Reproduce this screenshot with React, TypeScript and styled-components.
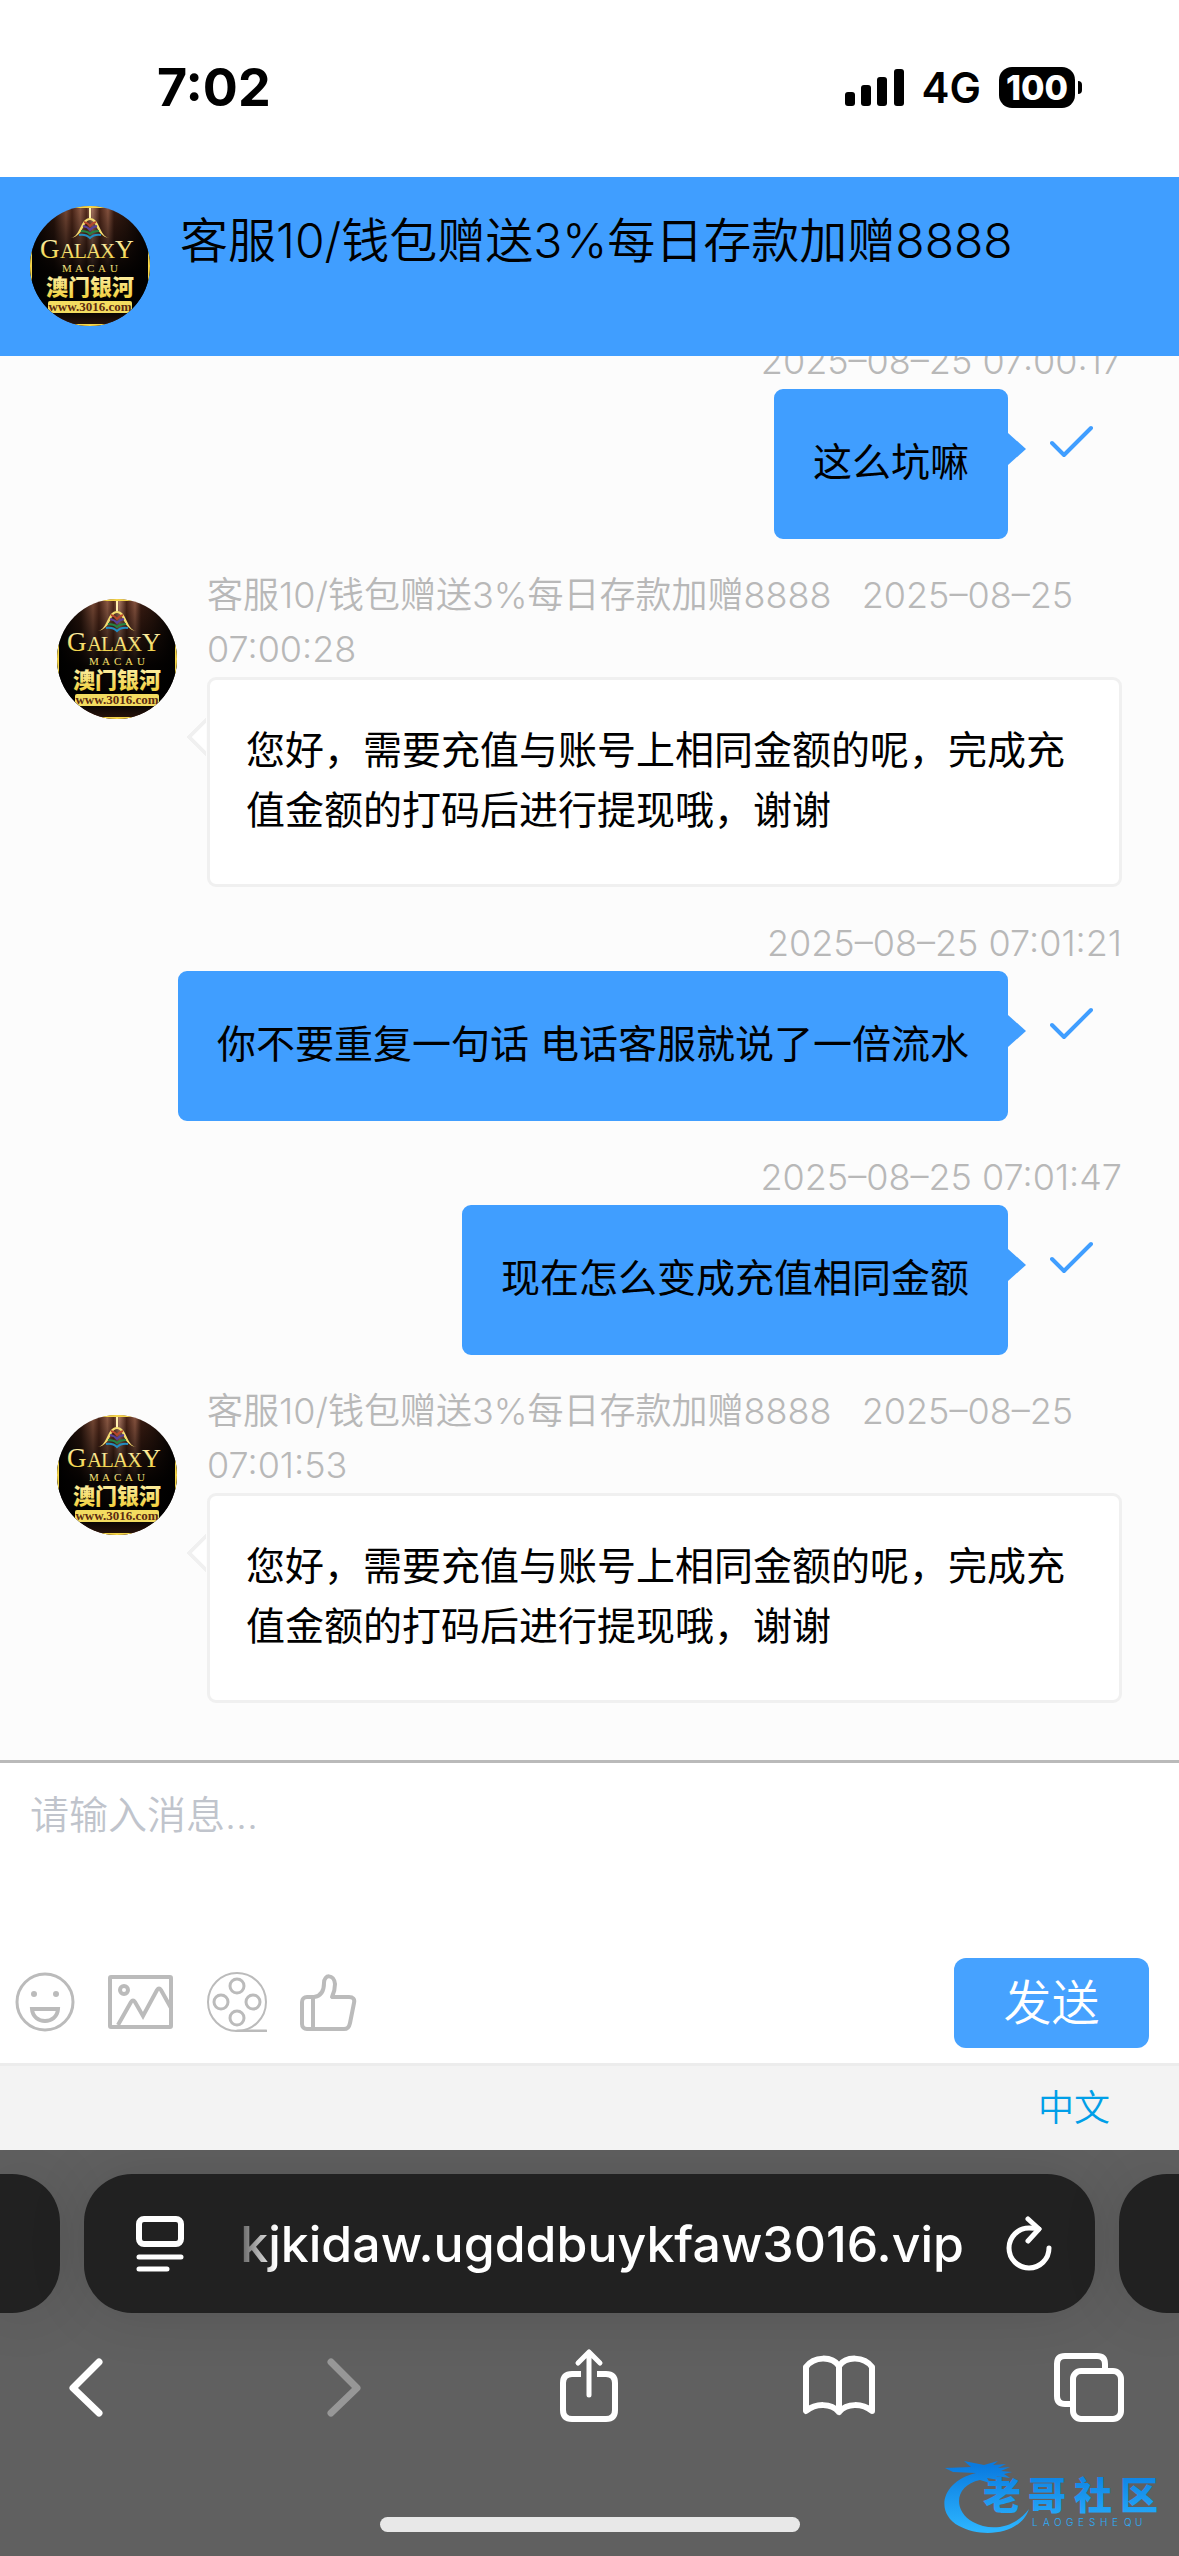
import React from "react";
import styled, { createGlobalStyle, css } from "styled-components";

const sans = `Inter, "Noto Sans CJK SC", sans-serif`;

const GlobalStyle = createGlobalStyle`
  *, *::before, *::after { box-sizing: border-box; }
  body { margin: 0; background: #fff; }
  button, textarea { font: inherit; }
`;

const Page = styled.div`
  display: flex;
  flex-direction: column;
  height: 100vh;
  overflow: hidden;
  font-family: ${sans};
  font-weight: 350;
  color: #000;
`;

/* ---------- status bar ---------- */

const StatusBar = styled.div`
  flex: none;
  display: flex;
  align-items: center;
  justify-content: space-between;
  height: 177px;
  padding: 0 97px 2px 157px;
  background: #fff;
`;

const Clock = styled.time`
  font-size: 52px;
  font-weight: 700;
  line-height: 60px;
`;

const StatusIcons = styled.div`
  display: flex;
  align-items: center;
  gap: 18px;
`;

const Network = styled.span`
  font-size: 42px;
  font-weight: 600;
  line-height: 48px;
`;

const Battery = styled.div`
  display: flex;
  align-items: center;
  gap: 3px;
  &::after {
    content: "";
    width: 4px;
    height: 13px;
    border-radius: 0 4px 4px 0;
    background: #000;
  }
`;

const BatteryLevel = styled.span`
  width: 76px;
  border-radius: 13px;
  background: #000;
  color: #fff;
  font-size: 34px;
  font-weight: 800;
  line-height: 41px;
  text-align: center;
`;

/* ---------- chat ---------- */

const ChatHeader = styled.header`
  flex: none;
  display: flex;
  gap: 30px;
  height: 179px;
  padding: 29px 30px;
  background: #409eff;
`;

const ChatTitle = styled.h1`
  margin: 0;
  font-size: 48px;
  font-weight: 350;
  line-height: 69px;
`;

const AvatarSvg = styled.svg`
  flex: none;
  display: block;
  width: 120px;
  height: 120px;
  border-radius: 50%;
`;

const MessageList = styled.main`
  flex: 1 1 0;
  min-height: 0;
  display: flex;
  flex-direction: column;
  justify-content: flex-end;
  gap: 29px;
  padding: 0 57px;
  padding-bottom: 57px;
  overflow: hidden;
  background: #fcfcfc;
`;

const AgentMessage = styled.article`
  flex: none;
  display: grid;
  grid-template-columns: 120px 1fr;
  column-gap: 30px;
  align-items: start;
  & > svg { margin-top: 31px; }
`;

const OwnMessage = styled.article`
  flex: none;
  display: flex;
  flex-direction: column;
  align-items: flex-end;
`;

const Meta = styled.div`
  padding-bottom: 1px;
  color: #b8b8b8;
  font-size: 36px;
  line-height: 54px;
`;

const Sender = styled.span`
  margin-right: 20px;
`;

const OwnRow = styled.div`
  display: flex;
  gap: 42px;
  padding-right: 29px;
  & > svg { margin-top: 36px; }
`;

const Bubble = styled.p<{ $own?: boolean }>`
  position: relative;
  margin: 0;
  padding: 40px 36px 44px;
  border: 3px solid ${(p) => (p.$own ? "#409eff" : "#f0f0f0")};
  border-radius: 9px;
  background: ${(p) => (p.$own ? "#409eff" : "#fff")};
  font-size: 39px;
  font-weight: 400;
  line-height: 60px;

  &::before {
    content: "";
    position: absolute;
    ${(p) =>
      p.$own
        ? css`
            top: 41px;
            left: 100%;
            border: 16px solid transparent;
            border-left: 18px solid #409eff;
            border-right: 0;
            margin-left: 3px;
          `
        : css`
            top: 43px;
            left: -18px;
            width: 28px;
            height: 28px;
            border: solid #f0f0f0;
            border-width: 0 0 4px 4px;
            background: #fff;
            clip-path: polygon(0 0, 100% 100%, 0 100%);
            transform: rotate(45deg);
          `}
  }
`;

/* ---------- composer ---------- */

const Composer = styled.form`
  flex: none;
  border-top: 3px solid #bababa;
  border-bottom: 3px solid #ececec;
  background: #fff;
`;

const MessageInput = styled.textarea`
  display: block;
  width: 100%;
  height: 180px;
  padding: 22px 30px;
  border: 0;
  outline: 0;
  resize: none;
  background: transparent;
  font-size: 39px;
  line-height: 60px;
  &::placeholder { color: #c0c4cc; opacity: 1; }
`;

const ComposerTools = styled.div`
  display: flex;
  align-items: center;
  justify-content: space-between;
  height: 120px;
  padding: 0 30px 0 15px;
`;

const ToolGroup = styled.div`
  display: flex;
  align-items: center;
  gap: 33px;
  padding-bottom: 3px;
`;

const IconButton = styled.button`
  display: flex;
  padding: 0;
  border: 0;
  background: none;
  color: inherit;
`;

const ToolButton = styled(IconButton)`
  color: #bbb;
`;

const SendButton = styled.button`
  width: 195px;
  height: 90px;
  padding: 0;
  border: 0;
  border-radius: 12px;
  background: #46a2ff;
  color: #fff;
  font-size: 48px;
  line-height: 90px;
`;

const LanguageBar = styled.div`
  flex: none;
  display: flex;
  justify-content: flex-end;
  align-items: center;
  height: 84px;
  padding: 0 69px;
  background: #f3f3f3;
`;

const LanguageLink = styled.a`
  color: #009fe8;
  font-size: 36px;
  line-height: 54px;
  text-decoration: none;
`;

/* ---------- browser chrome ---------- */

const BrowserChrome = styled.footer`
  position: relative;
  flex: none;
  height: 406px;
  padding-top: 24px;
  overflow: hidden;
  background: #606060;
  color: #fff;
`;

const TabStrip = styled.div`
  display: flex;
  gap: 24px;
`;

const TabPill = styled.div`
  height: 139px;
  border-radius: 48px;
  background: #212121;
  box-shadow: 0 0 60px rgba(0, 0, 0, 0.12);
`;

const SideTab = styled(TabPill)<{ $side: "left" | "right" }>`
  flex: 0 0 60px;
  border-radius: ${(p) => (p.$side === "left" ? "0 48px 48px 0" : "48px 0 0 48px")};
`;

const AddressBar = styled(TabPill)`
  flex: 1;
  display: flex;
  align-items: center;
  gap: 42px;
  padding: 0 43px 0 52px;
`;

const Address = styled.span`
  flex: 1;
  text-align: right;
  font-size: 50px;
  font-weight: 500;
  line-height: 60px;
  mask-image: linear-gradient(to right, transparent, #000 50px);
`;

const BrowserNav = styled.nav`
  display: flex;
  justify-content: space-between;
  padding: 34px 52px 34px 49px;
`;

const HomeIndicator = styled.div`
  width: 420px;
  height: 15px;
  margin: 60px auto 0;
  border-radius: 8px;
  background: #e8e8e8;
`;

const Watermark = styled.svg`
  position: absolute;
  right: 10px;
  bottom: 20px;
  width: 229px;
  height: 80px;
`;

/* ---------- drawings ---------- */

const Avatar = ({ id }: { id: string }) => (
  <AvatarSvg viewBox="0 0 120 120" role="img" aria-label="Galaxy Macau">
    <defs>
      <linearGradient id={`${id}-curtain`} x1="0" x2="1" y1="0" y2="0">
        <stop offset="0" stopColor="#000" />
        <stop offset=".2" stopColor="#2a150d" />
        <stop offset=".3" stopColor="#7a4a36" />
        <stop offset=".35" stopColor="#4a2417" />
        <stop offset=".42" stopColor="#8f5b45" />
        <stop offset=".47" stopColor="#552c1d" />
        <stop offset=".52" stopColor="#a87560" />
        <stop offset=".58" stopColor="#4a2417" />
        <stop offset=".65" stopColor="#8a5540" />
        <stop offset=".7" stopColor="#3a1c12" />
        <stop offset=".8" stopColor="#2a150d" />
        <stop offset="1" stopColor="#000" />
      </linearGradient>
      <linearGradient id={`${id}-fade`} x1="0" x2="0" y1="0" y2="1">
        <stop offset="0" stopColor="#000" stopOpacity="0" />
        <stop offset=".55" stopColor="#000" stopOpacity=".9" />
        <stop offset=".85" stopColor="#000" />
        <stop offset="1" stopColor="#2a150c" />
      </linearGradient>
      <linearGradient id={`${id}-gold`} x1="0" x2="0" y1="0" y2="1">
        <stop offset="0" stopColor="#fff6c0" />
        <stop offset="1" stopColor="#f0cc30" />
      </linearGradient>
    </defs>
    <rect width="120" height="120" fill={`url(#${id}-curtain)`} />
    <rect width="120" height="120" fill={`url(#${id}-fade)`} />
    <path d="M0 1h120M0 119h120M1 0v120M119 0v120" stroke="#f5d54a" strokeWidth="2" />
    <path d="M59 2h2v12h-2z" fill="#fff0b0" />
    <path d="M41 32c10-2 9-20 19-20s9 18 19 20c-13-2-12-18-19-18s-6 16-19 18z" fill="#f4dc70" />
    <g fill="none" strokeWidth="2">
      <path d="M54 16q4 1 6 4 2-3 6-4" stroke="#b8472c" />
      <path d="M53 20q5 1 7 4 2-3 7-4" stroke="#59419a" />
      <path d="M51 25q6 0 9 3 3-3 9-3" stroke="#258343" />
      <path d="M49 29q7-1 11 3 4-4 11-3" stroke="#238cc0" />
    </g>
    <g fontFamily="'Liberation Serif', serif" fill={`url(#${id}-gold)`}>
      <text x="10" y="52" fontSize="27">G</text>
      <text x="30 44 56 70" y="52" fontSize="21">ALAX</text>
      <text x="85" y="52" fontSize="26">Y</text>
      <text x="32 45 57 68 80" y="66" fontSize="11">MACAU</text>
    </g>
    <text x="60" y="89" fontSize="22" fontWeight="800" textAnchor="middle" fontFamily="'Noto Sans CJK SC', sans-serif" fill={`url(#${id}-gold)`}>澳门银河</text>
    <rect x="18" y="95" width="84" height="12" rx="2" fill="#f3dc60" />
    <text x="60" y="105" fontSize="13" fontWeight="700" textAnchor="middle" fontFamily="'Liberation Serif', serif" fill="#5b2a10">www.3016.com</text>
  </AvatarSvg>
);

const SignalIcon = () => (
  <svg width="59" height="37" viewBox="0 0 59 37" aria-hidden="true">
    <rect x="0" y="23" width="10" height="14" rx="3" />
    <rect x="16" y="16" width="10" height="21" rx="3" />
    <rect x="32" y="8" width="10" height="29" rx="3" />
    <rect x="49" y="0" width="10" height="37" rx="3" />
  </svg>
);

const SentIcon = () => (
  <svg width="43" height="33" viewBox="0 0 43 33" role="img" aria-label="已发送">
    <path d="M2 18l12 12L41 3" fill="none" stroke="#409eff" strokeWidth="4" strokeLinecap="round" strokeLinejoin="round" />
  </svg>
);

const SmileIcon = () => (
  <svg width="60" height="60" viewBox="0 0 60 60" fill="none" stroke="currentColor" strokeWidth="3">
    <circle cx="30" cy="30" r="28" />
    <circle cx="19" cy="22" r="3" fill="currentColor" stroke="none" />
    <circle cx="41" cy="22" r="3" fill="currentColor" stroke="none" />
    <path d="M17 37h26c-1 16-25 16-26 0z" strokeWidth="4" />
  </svg>
);

const ImageIcon = () => (
  <svg width="66" height="54" viewBox="0 0 66 54" fill="none" stroke="currentColor" strokeWidth="4" strokeLinejoin="round">
    <rect x="2" y="2" width="61" height="50" rx="1" />
    <circle cx="16" cy="15" r="4" />
    <path d="M10 50L23 27q2-3 4 0l8 14L49 15q2-3 4 0l10 18" strokeLinejoin="miter" />
  </svg>
);

const FilmIcon = () => (
  <svg width="60" height="60" viewBox="0 0 60 60" fill="none" stroke="currentColor" strokeWidth="3">
    <circle cx="30" cy="30" r="29" strokeWidth="2" />
    <circle cx="30" cy="14" r="7" />
    <circle cx="14" cy="30" r="7" />
    <circle cx="46" cy="30" r="7" />
    <circle cx="30" cy="46" r="7" />
    <path d="M30 59h29" strokeLinecap="round" />
  </svg>
);

const ThumbIcon = () => (
  <svg width="57" height="58" viewBox="0 0 57 58" fill="none" stroke="currentColor" strokeWidth="4" strokeLinejoin="round">
    <path d="M14 24c8-1 10-8 10-14 0-9 10-9 11 1 0 5-1 9-3 13h17c4 0 6 2 5 6l-4 20c-1 5-3 6-6 6H7c-3 0-5-2-5-5V29c0-3 2-5 5-5z" />
    <path d="M13 24v31" />
  </svg>
);

const PageMenuIcon = () => (
  <svg width="48" height="56" viewBox="0 0 48 56" fill="none" stroke="currentColor" strokeWidth="6" strokeLinecap="round">
    <rect x="3" y="3" width="42" height="25" rx="5" />
    <path d="M3 41h42M3 53h28" strokeWidth="5" />
  </svg>
);

const ReloadIcon = () => (
  <svg width="46" height="56" viewBox="0 0 46 56" fill="none" stroke="currentColor" strokeWidth="5" strokeLinecap="round" strokeLinejoin="round">
    <path d="M43 32A20 20 0 1 1 23 12c4 0 7 0 10 1" />
    <path d="M22 3l11 10-11 12" />
  </svg>
);

const NavIcon = ({ children, faded }: { children: React.ReactNode; faded?: boolean }) => (
  <svg width="76" height="76" viewBox="0 0 76 76" fill="none" stroke={faded ? "#979797" : "currentColor"} strokeWidth="6" strokeLinecap="round" strokeLinejoin="round">
    {children}
  </svg>
);

const Logo = () => (
  <Watermark viewBox="0 0 229 80" role="img" aria-label="老哥社区">
    <defs>
      <linearGradient id="logo-blue" x1="0" x2="0" y1="10" y2="74" gradientUnits="userSpaceOnUse">
        <stop offset="0" stopColor="#0a7be0" />
        <stop offset="1" stopColor="#2cb4ff" />
      </linearGradient>
    </defs>
    <g fill="url(#logo-blue)">
      <path d="M36 17C2 25-6 56 19 70c24 13 62 8 70-17-14 19-38 23-56 13C12 54 15 29 40 24l10 3-3-5 12 2-3-4 14 2-6-4 8-2-11-1 9-4-12 1 8-4-13 1 5-4-14 4-20-4 7 6-26 1 8 4z" />
      <text x="43 88 134 180" y="53" fontSize="38" fontWeight="900" fontFamily="'Noto Sans CJK SC', sans-serif">老哥社区</text>
      <text x="92 103 114 126 138 149 160 172 184 195" y="70" fontSize="10" fontFamily="Inter, sans-serif">LAOGESHEQU</text>
    </g>
  </Watermark>
);

/* ---------- data ---------- */

const agentName = "客服10/钱包赠送3%每日存款加赠8888";

type Message = { own: boolean; date: string; time: string; text: string };

const reply = "您好，需要充值与账号上相同金额的呢，完成充值金额的打码后进行提现哦，谢谢";

const messages: Message[] = [
  { own: true, date: "2025–08–25", time: "07:00:17", text: "这么坑嘛" },
  { own: false, date: "2025–08–25", time: "07:00:28", text: reply },
  { own: true, date: "2025–08–25", time: "07:01:21", text: "你不要重复一句话 电话客服就说了一倍流水" },
  { own: true, date: "2025–08–25", time: "07:01:47", text: "现在怎么变成充值相同金额" },
  { own: false, date: "2025–08–25", time: "07:01:53", text: reply },
];

export default function App() {
  return (
    <Page>
      <GlobalStyle />
      <StatusBar>
        <Clock>7:02</Clock>
        <StatusIcons>
          <SignalIcon />
          <Network>4G</Network>
          <Battery>
            <BatteryLevel>100</BatteryLevel>
          </Battery>
        </StatusIcons>
      </StatusBar>

      <ChatHeader>
        <Avatar id="header" />
        <ChatTitle>{agentName}</ChatTitle>
      </ChatHeader>

      <MessageList>
        {messages.map((m, i) =>
          m.own ? (
            <OwnMessage key={m.time}>
              <Meta>{m.date} {m.time}</Meta>
              <OwnRow>
                <Bubble $own>{m.text}</Bubble>
                <SentIcon />
              </OwnRow>
            </OwnMessage>
          ) : (
            <AgentMessage key={m.time}>
              <Avatar id={`agent-${i}`} />
              <div>
                <Meta>
                  <Sender>{agentName}</Sender>{" "}
                  {m.date} {m.time}
                </Meta>
                <Bubble>{m.text}</Bubble>
              </div>
            </AgentMessage>
          )
        )}
      </MessageList>

      <Composer onSubmit={(e) => e.preventDefault()}>
        <MessageInput aria-label="消息" placeholder="请输入消息..." />
        <ComposerTools>
          <ToolGroup>
            <ToolButton type="button" aria-label="表情"><SmileIcon /></ToolButton>
            <ToolButton type="button" aria-label="图片"><ImageIcon /></ToolButton>
            <ToolButton type="button" aria-label="视频"><FilmIcon /></ToolButton>
            <ToolButton type="button" aria-label="评价"><ThumbIcon /></ToolButton>
          </ToolGroup>
          <SendButton type="submit">发送</SendButton>
        </ComposerTools>
      </Composer>

      <LanguageBar>
        <LanguageLink href="#language">中文</LanguageLink>
      </LanguageBar>

      <BrowserChrome>
        <TabStrip>
          <SideTab $side="left" />
          <AddressBar>
            <IconButton type="button" aria-label="页面菜单"><PageMenuIcon /></IconButton>
            <Address>kjkidaw.ugddbuykfaw3016.vip</Address>
            <IconButton type="button" aria-label="重新载入"><ReloadIcon /></IconButton>
          </AddressBar>
          <SideTab $side="right" />
        </TabStrip>
        <BrowserNav>
          <IconButton type="button" aria-label="后退">
            <NavIcon><path d="M50 15L24 41l26 25" strokeWidth="7" /></NavIcon>
          </IconButton>
          <IconButton type="button" aria-label="前进" disabled>
            <NavIcon faded><path d="M31 15l26 26-26 25" strokeWidth="7" /></NavIcon>
          </IconButton>
          <IconButton type="button" aria-label="分享">
            <NavIcon>
              <path d="M31 27h-9q-9 0-9 9v27q0 9 9 9h34q9 0 9-9V36q0-9-9-9h-9" strokeLinecap="butt" />
              <path d="M39 48V5M28 16L39 5l11 11" strokeWidth="5" />
            </NavIcon>
          </IconButton>
          <IconButton type="button" aria-label="书签">
            <NavIcon><path d="M38 65C30 56 15 56 5 64V20c8-11 26-11 33-1 7-10 25-10 33 1v44c-10-8-25-8-33 1zM38 19v46" /></NavIcon>
          </IconButton>
          <IconButton type="button" aria-label="标签页">
            <NavIcon>
              <rect x="22" y="24" width="48" height="48" rx="8" />
              <path d="M54 22v-5q0-8-8-8H14q-8 0-8 8v32q0 8 8 8h6" strokeLinecap="butt" />
            </NavIcon>
          </IconButton>
        </BrowserNav>
        <HomeIndicator />
        <Logo />
      </BrowserChrome>
    </Page>
  );
}
